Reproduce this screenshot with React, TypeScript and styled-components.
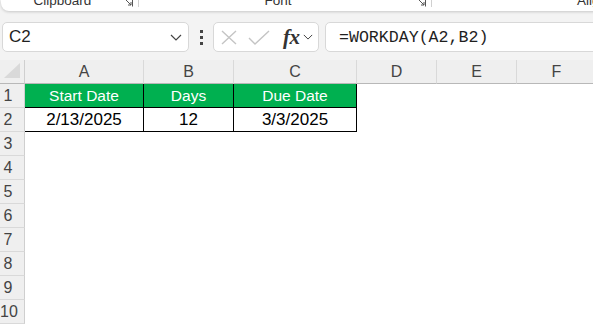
import styled, { createGlobalStyle } from "styled-components";

const GlobalStyle = createGlobalStyle`
  html, body {
    margin: 0;
    padding: 0;
    background: #f3f3f3;
  }
  * {
    box-sizing: border-box;
  }
`;

const COLS = [
  { key: "A", width: 119 },
  { key: "B", width: 90 },
  { key: "C", width: 123 },
  { key: "D", width: 80 },
  { key: "E", width: 80 },
  { key: "F", width: 80 },
];

const TABLE: { text: string; head?: boolean }[][] = [
  [{ text: "Start Date", head: true }, { text: "Days", head: true }, { text: "Due Date", head: true }],
  [{ text: "2/13/2025" }, { text: "12" }, { text: "3/3/2025" }],
];

const ROWS = [1, 2, 3, 4, 5, 6, 7, 8, 9, 10, 11];

const Launcher = () => (
  <svg width="9" height="9" viewBox="0 0 9 9">
    <path d="M0.5 0.5 H8.5 V8.5" stroke="#555" fill="none" />
    <path d="M2 2 L7 7 M4 7 H7 V4" stroke="#555" fill="none" />
  </svg>
);

const Chevron = ({ size = 12 }: { size?: number }) => (
  <svg width={size} height={size / 2 + 1} viewBox="0 0 12 7">
    <path d="M1 1 L6 6 L11 1" stroke="#444" strokeWidth="1.2" fill="none" />
  </svg>
);

const App = () => {
  return (
    <Page>
      <GlobalStyle />
      <Ribbon>
        <Group $width={138}>
          <GroupLabel $align="center">Clipboard</GroupLabel>
          <Launcher />
        </Group>
        <Group $width={293} $pad={0}>
          <GroupLabel $align="center">Font</GroupLabel>
          <Launcher />
        </Group>
        <Group $width={220} $last>
          <GroupLabel $align="left" $indent={145}>
            Alignment
          </GroupLabel>
        </Group>
      </Ribbon>

      <FormulaBar>
        <NameBox>
          <NameText>C2</NameText>
          <Chevron />
        </NameBox>
        <Dots>
          <i />
          <i />
          <i />
        </Dots>
        <FxBox>
          <svg width="16" height="15" viewBox="0 0 16 15">
            <path d="M1 1 L15 14 M15 1 L1 14" stroke="#c4c4c4" strokeWidth="1.4" fill="none" />
          </svg>
          <svg width="22" height="15" viewBox="0 0 22 15">
            <path d="M1 8 L7 14 L21 1" stroke="#c4c4c4" strokeWidth="1.4" fill="none" />
          </svg>
          <FxText>fx</FxText>
          <Chevron size={10} />
        </FxBox>
        <FormulaInput>=WORKDAY(A2,B2)</FormulaInput>
      </FormulaBar>

      <Sheet>
        <Corner>
          <svg width="17" height="16" viewBox="0 0 17 16">
            <path d="M16 0 L16 15 L0 15 Z" fill="#d9d9d9" />
          </svg>
        </Corner>
        {COLS.map((c) => (
          <ColHead key={c.key} $width={c.width}>
            {c.key}
          </ColHead>
        ))}
        {ROWS.map((r) => (
          <Row key={r}>
            <RowHead>{r}</RowHead>
            {COLS.map((c, ci) => {
              const cell = TABLE[r - 1]?.[ci];
              return (
                <Cell key={c.key} $width={c.width} $boxed={!!cell} $head={cell?.head}>
                  {cell?.text}
                </Cell>
              );
            })}
          </Row>
        ))}
      </Sheet>
    </Page>
  );
};

export default App;

const Page = styled.div`
  width: 593px;
  height: 324px;
  overflow: hidden;
  background: #f3f3f3;
  font-family: "Liberation Sans", Arial, sans-serif;
`;

const Ribbon = styled.div`
  display: flex;
  align-items: flex-end;
  height: 11px;
  margin-left: 1px;
  width: 660px;
  background: #ffffff;
  border-bottom-left-radius: 8px;
  box-shadow: 0 1px 3px rgba(0, 0, 0, 0.18);
  overflow: hidden;
`;

const Group = styled.div<{ $width: number; $last?: boolean; $pad?: number }>`
  display: flex;
  align-items: flex-end;
  flex-shrink: 0;
  width: ${(p) => p.$width}px;
  height: 16px;
  padding-left: ${(p) => p.$pad ?? 0}px;
  padding-right: ${(p) => (p.$last ? 0 : 5)}px;
  margin-bottom: 4px;
  border-right: ${(p) => (p.$last ? "none" : "1px solid #d0d0d0")};
`;

const GroupLabel = styled.span<{ $align: string; $indent?: number }>`
  flex: 1;
  padding-left: ${(p) => p.$indent ?? 0}px;
  text-align: ${(p) => p.$align};
  font-size: 13.5px;
  line-height: 13px;
  color: #333;
  white-space: nowrap;
`;

const FormulaBar = styled.div`
  display: flex;
  align-items: center;
  height: 30px;
  margin-top: 11px;
  padding-left: 2px;
`;

const NameBox = styled.div`
  display: flex;
  align-items: center;
  justify-content: space-between;
  width: 187px;
  height: 30px;
  padding: 0 6px 0 6px;
  background: #ffffff;
  border: 1px solid #d8d8d8;
  border-radius: 5px;
`;

const NameText = styled.span`
  font-size: 17px;
  color: #1f1f1f;
`;

const Dots = styled.div`
  display: flex;
  flex-direction: column;
  gap: 3px;
  margin: 0 10px 0 11px;

  i {
    display: block;
    width: 3px;
    height: 3px;
    background: #444;
  }
`;

const FxBox = styled.div`
  display: flex;
  align-items: center;
  width: 106px;
  height: 30px;
  padding-left: 7px;
  background: #ffffff;
  border: 1px solid #d8d8d8;
  border-radius: 5px;

  svg:nth-child(2) {
    margin-left: 11px;
  }
  svg:last-child {
    margin-left: 3px;
  }
`;

const FxText = styled.span`
  margin-left: 13px;
  font-family: "Liberation Serif", "Times New Roman", serif;
  font-style: italic;
  font-weight: bold;
  font-size: 21px;
  color: #333;
  letter-spacing: -0.5px;
`;

const FormulaInput = styled.div`
  flex: 1;
  display: flex;
  align-items: center;
  height: 30px;
  margin-left: 6px;
  margin-right: -10px;
  padding-left: 13px;
  background: #ffffff;
  border: 1px solid #d8d8d8;
  border-radius: 5px;
  font-family: "Liberation Mono", "Courier New", monospace;
  font-size: 16.6px;
  color: #1f1f1f;
`;

const Sheet = styled.div`
  display: flex;
  flex-wrap: wrap;
  width: 620px;
  margin-top: 8px;
`;

const Corner = styled.div`
  display: flex;
  align-items: flex-end;
  justify-content: flex-end;
  width: 25px;
  height: 24px;
  padding: 0 3px 4px 0;
  background: #efefef;
  border-right: 1px solid #cfcfcf;
  border-bottom: 1px solid #b8b8b8;
`;

const ColHead = styled.div<{ $width: number }>`
  display: flex;
  align-items: center;
  justify-content: center;
  width: ${(p) => p.$width}px;
  height: 24px;
  background: #efefef;
  border-right: 1px solid #d9d9d9;
  border-bottom: 1px solid #b8b8b8;
  font-size: 16px;
  color: #444;
`;

const Row = styled.div`
  display: flex;
  width: 100%;
`;

const RowHead = styled.div`
  width: 25px;
  height: 24px;
  padding-right: 8px;
  line-height: 23px;
  text-align: center;
  background: #efefef;
  border-right: 1px solid #cfcfcf;
  border-bottom: 1px solid #d9d9d9;
  font-size: 16px;
  color: #444;
`;

const Cell = styled.div<{ $width: number; $boxed: boolean; $head?: boolean }>`
  display: flex;
  align-items: center;
  justify-content: center;
  width: ${(p) => p.$width}px;
  height: 24px;
  background: ${(p) => (p.$head ? "#00b050" : "#ffffff")};
  border-right: 1px solid ${(p) => (p.$boxed ? "#000000" : "transparent")};
  border-bottom: 1px solid ${(p) => (p.$boxed ? "#000000" : "transparent")};
  font-size: ${(p) => (p.$head ? 15.5 : 17)}px;
  color: ${(p) => (p.$head ? "#ffffff" : "#000000")};
`;
